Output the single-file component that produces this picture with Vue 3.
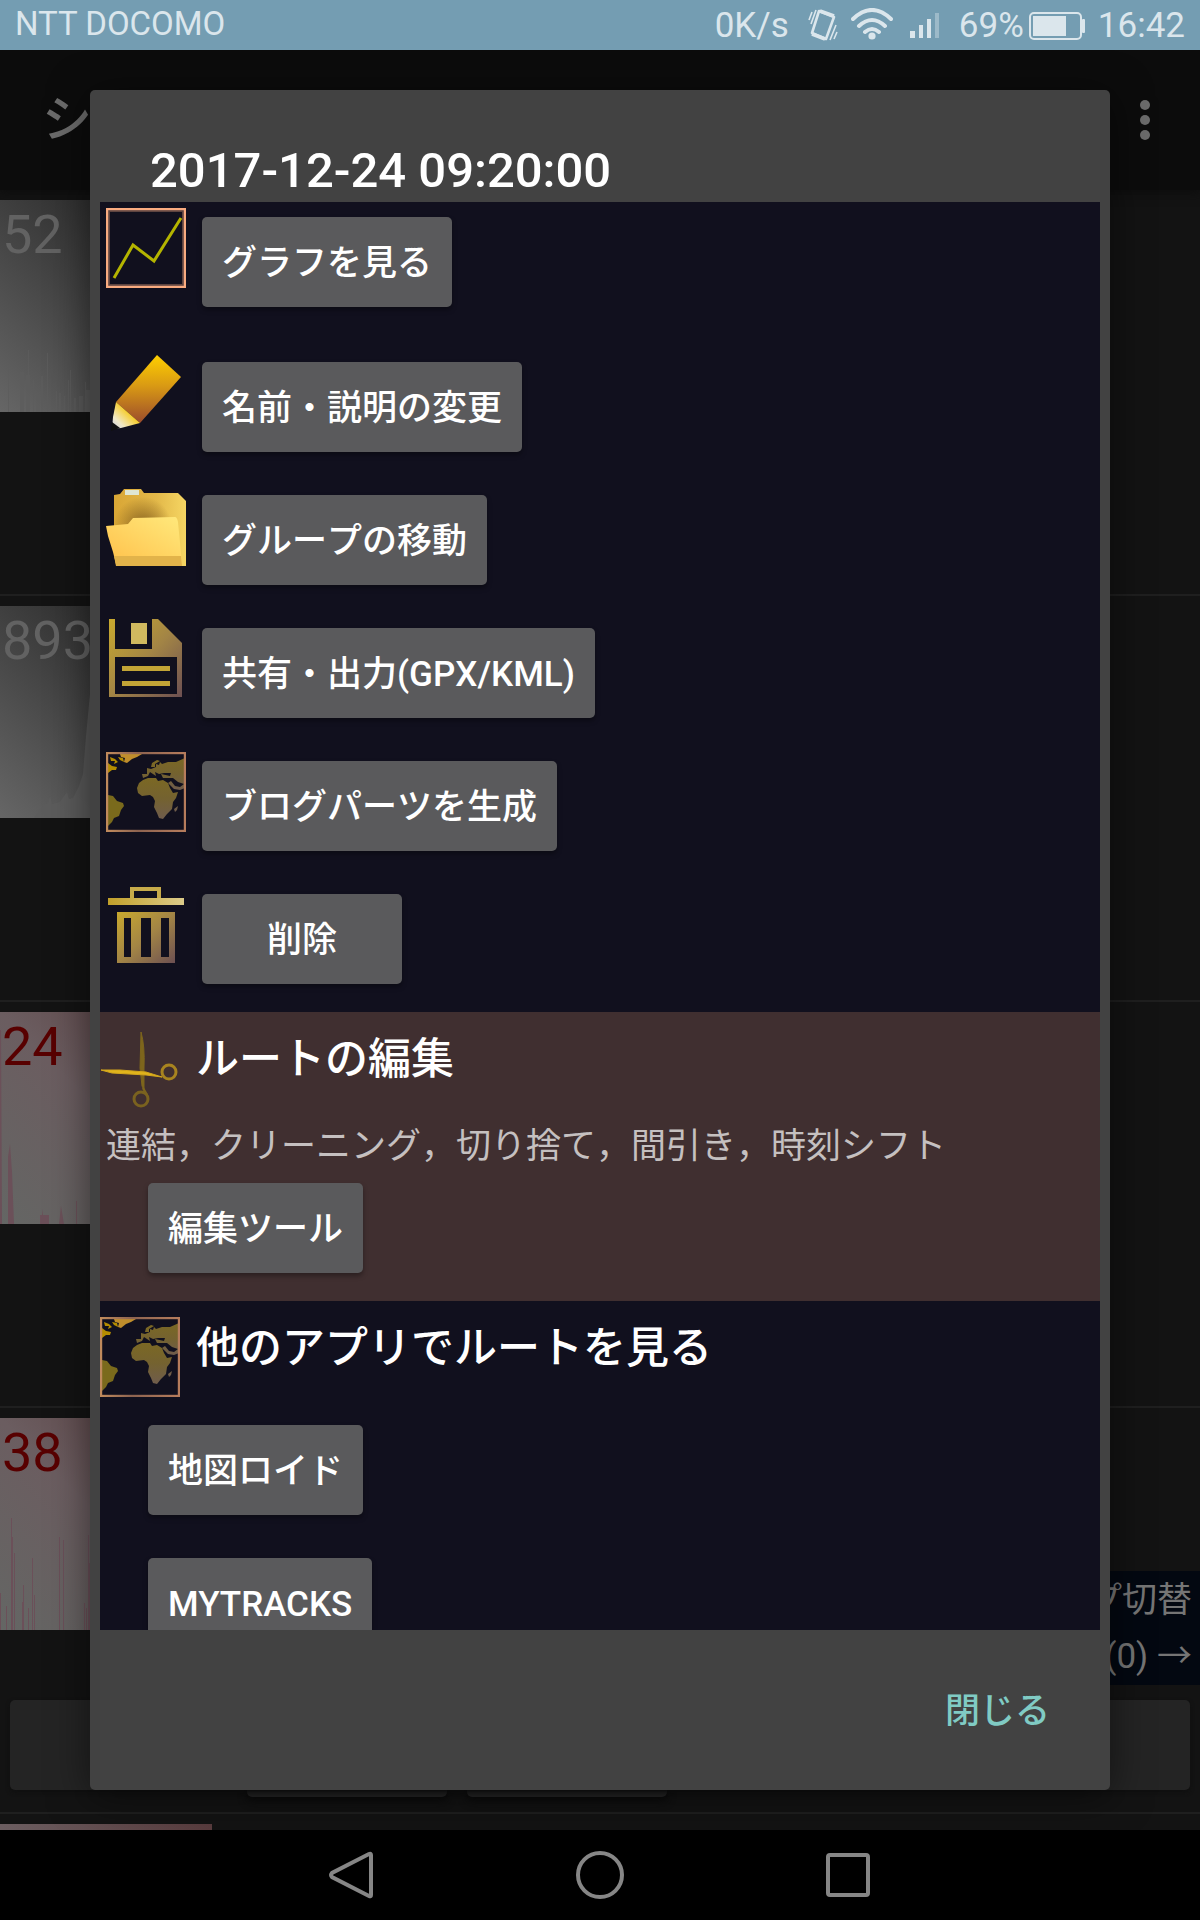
<template>
  <div class="phone">
    <svg class="defs" aria-hidden="true">
      <defs>
        <linearGradient id="gold" x1="0" y1="0" x2="1" y2="1">
          <stop offset="0" stop-color="#c9a92e" />
          <stop offset="0.5" stop-color="#a38545" />
          <stop offset="1" stop-color="#6d5052" />
        </linearGradient>
        <linearGradient id="lid" x1="0" y1="0" x2="1" y2="0">
          <stop offset="0" stop-color="#c2a02a" />
          <stop offset="1" stop-color="#dccb8a" />
        </linearGradient>
        <linearGradient id="pencil-body" x1="0" y1="0" x2="0" y2="1">
          <stop offset="0" stop-color="#ffcf00" />
          <stop offset="0.45" stop-color="#d99a14" />
          <stop offset="1" stop-color="#9c4c2c" />
        </linearGradient>
        <linearGradient id="pencil-tip" x1="1" y1="0" x2="0" y2="1">
          <stop offset="0.4" stop-color="#f7cd2c" />
          <stop offset="0.75" stop-color="#f0e8c8" />
          <stop offset="0.9" stop-color="#d8d8d8" />
        </linearGradient>
        <linearGradient id="folder-back" x1="0" y1="0" x2="1" y2="0">
          <stop offset="0" stop-color="#d9a635" />
          <stop offset="0.6" stop-color="#e3b94a" />
          <stop offset="1" stop-color="#f6d663" />
        </linearGradient>
        <radialGradient id="folder-shade" cx="0.4" cy="0.45" r="0.4">
          <stop offset="0" stop-color="#8a6420" />
          <stop offset="1" stop-color="#8a6420" stop-opacity="0" />
        </radialGradient>
        <linearGradient id="folder-front" x1="0" y1="1" x2="1" y2="0">
          <stop offset="0" stop-color="#ffc04a" />
          <stop offset="1" stop-color="#ffe97c" />
        </linearGradient>
        <linearGradient id="land" x1="0" y1="0" x2="0" y2="1">
          <stop offset="0" stop-color="#7b6824" />
          <stop offset="0.5" stop-color="#746230" />
          <stop offset="1" stop-color="#6f5c4c" />
        </linearGradient>
        <linearGradient id="map-frame" x1="0" y1="0" x2="1" y2="0">
          <stop offset="0" stop-color="#c08a5c" />
          <stop offset="0.4" stop-color="#8d6350" />
          <stop offset="1" stop-color="#b67c5c" />
        </linearGradient>
      </defs>
      <symbol id="icon-chart" viewBox="0 0 80 80">
        <rect x="2.5" y="2.5" width="75" height="75" fill="none" stroke="#5e4440" stroke-width="3" />
        <rect x="1" y="1" width="78" height="78" fill="none" stroke="#f9ab80" stroke-width="2.4" />
        <path d="M8 70L27 37L48 53L75 10" fill="none" stroke="#b4b400" stroke-width="3" />
      </symbol>
      <symbol id="icon-pencil" viewBox="0 0 80 80">
        <path d="M51 2L75 24L34 70L10 49Z" fill="url(#pencil-body)" />
        <path d="M10 49L34 70L15 75L6 76L7 64Z" fill="url(#pencil-tip)" />
        <path d="M6 69L14 75L5 78Z" fill="#111" />
      </symbol>
      <symbol id="icon-folder" viewBox="0 0 80 80">
        <path d="M8 9L14 8L18 3H35L38 7H72L80 15V80H10L8 40Z" fill="url(#folder-back)" />
        <path d="M8 9L14 8L72 7L80 15V80H10L8 40Z" fill="url(#folder-shade)" />
        <rect x="19" y="4" width="14" height="5" fill="#dfe6d2" />
        <path d="M0 40L22 38L27 32L69 31Q71 31 72 36L76 78H10L7 66L2 50Z" fill="url(#folder-front)" />
        <path d="M8 70H75L76 80H10Z" fill="#e2b34a" />
      </symbol>
      <symbol id="icon-save" viewBox="0 0 80 80">
        <path d="M3 0H9V30H46V0H52L76 24V78H3ZM9 38V75H71V38Z" fill="url(#gold)" fill-rule="evenodd" />
        <rect x="25" y="4" width="16" height="21" fill="#d0b95f" />
        <rect x="16" y="47" width="48" height="5" fill="#c2a436" />
        <rect x="16" y="62" width="48" height="5" fill="#c2a436" />
      </symbol>
      <symbol id="icon-map" viewBox="0 0 80 80">
        <path d="M14 2H36L31 5L26 7L21 11L18 10L19 6L15 5Z" fill="#c08e2c" />
        <path d="M2 11L6 14L11 15L10 18L6 18L2 21ZM4 5L9 7L12 10L8 12L9 9L5 9ZM12 5L17 6L18 10L14 8Z" fill="#b48c00" />
        <path d="M2 43L7 44L11 49L17 51L18 54L15 58L13 64L8 66L6 70L2 74Z" fill="#7a6a1c" />
        <g fill="url(#land)">
          <path d="M31 36L33 31L37 28L42 26L50 26L52 29L57 28L62 31L64 36L67 41L72 40L70 46L67 50L66 57L61 62L57 67L53 66L51 61L48 55L49 49L47 45L44 43L36 44L32 41Z" />
          <path d="M37 26L36 22L41 22L41 16L45 17L50 15L50 12L53 13L54 10L56 12L62 10L70 10L79 6V36L74 38L68 37L62 31L65 29L69 34L74 35L78 32L72 30L67 26L57 26L55 22L64 24L65 21L58 21L53 22L49 20L50 24L44 20L42 24Z" />
          <path d="M45 15L46 11L51 8L54 9L49 12L49 15ZM68 57L72 54L71 58L69 60Z" />
        </g>
        <rect x="1" y="1" width="78" height="78" fill="none" stroke="url(#map-frame)" stroke-width="2.4" />
      </symbol>
      <symbol id="icon-trash" viewBox="0 0 80 80">
        <path d="M26 14V4H53V14" fill="none" stroke="#c7ab4a" stroke-width="4" />
        <rect x="2" y="13" width="76" height="7" fill="url(#lid)" />
        <path d="M11 27H69V78H11ZM18 33V72H25V33ZM35 33V72H45V33ZM55 33V72H63V33Z" fill="url(#gold)" fill-rule="evenodd" />
      </symbol>
      <symbol id="icon-scissors" viewBox="0 0 80 80">
        <path d="M41 4Q45 18 44 40L44 62L42 58L40 40Z" fill="#7d651c" stroke="#7d651c" />
        <path d="M43 60L47 67" stroke="#7d651c" stroke-width="2.4" />
        <circle cx="41" cy="71" r="7" fill="none" stroke="#7a621f" stroke-width="3" />
        <path d="M1 42L20 42L46 44L62 49L46 47L12 45Z" fill="#e0b41c" stroke="#d2a51c" />
        <circle cx="69" cy="44" r="7" fill="none" stroke="#a8841f" stroke-width="3" />
      </symbol>
    </svg>

    <header class="status">
      <span class="carrier">NTT DOCOMO</span>
      <div class="status-right">
        <span>0K/s</span>
        <svg class="vibrate" viewBox="0 0 30 34" fill="none" stroke="#dbe6ec">
          <path d="M11 3L26 9L18 31L4 25Z" stroke-width="2.6" stroke-linejoin="round" />
          <path d="M12 3L26 8M4 26L17 31" stroke-width="3.6" />
          <path d="M8 2L3 16M4 4L1 12M28 17L22 32M29 24L26 31" stroke-width="1.6" />
        </svg>
        <svg class="wifi" viewBox="0 0 42 32" fill="none" stroke="#dbe6ec" stroke-width="4" stroke-linecap="round">
          <path d="M2 11Q21 -7 40 11M8 18Q21 6 34 18M14 24Q21 18 28 24" />
          <circle cx="21" cy="28" r="3.6" fill="#dbe6ec" stroke="none" />
        </svg>
        <svg class="signal" viewBox="0 0 30 26" fill="#dbe6ec">
          <rect x="0" y="18" width="5" height="7" />
          <rect x="9" y="12" width="4" height="13" />
          <rect x="17" y="6" width="4" height="19" />
          <rect x="25" y="0" width="4" height="25" opacity="0.4" />
        </svg>
        <span class="percent">69%</span>
        <svg class="battery" viewBox="0 0 56 28">
          <rect x="1" y="1" width="51" height="26" rx="4" fill="none" stroke="#dbe6ec" stroke-width="2" />
          <rect x="4" y="4" width="33" height="20" fill="#dbe6ec" />
          <rect x="53" y="7" width="3" height="14" rx="1" fill="#dbe6ec" />
        </svg>
        <span>16:42</span>
      </div>
    </header>

    <main class="screen">
      <div class="app-bar">
        <span>シ</span>
        <button class="more" aria-label="メニュー"><i></i><i></i><i></i></button>
      </div>

      <ul class="tracks">
        <li v-for="track in tracks" :key="track.id" class="track">
          <div class="tile" :class="track.tone">
            <svg viewBox="0 0 212 212"><path :d="track.graph" /></svg>
            <span>{{ track.label }}</span>
          </div>
          <span class="slot"></span>
          <span class="slot"></span>
        </li>
      </ul>

      <div class="group-switch">
        <span>プ切替</span>
        <span>(0) →</span>
      </div>
      <div class="bottom-bar"></div>

      <section class="dialog" role="dialog" aria-labelledby="dialog-title">
        <h1 id="dialog-title">2017-12-24 09:20:00</h1>

        <div class="dialog-body">
          <div v-for="action in actions" :key="action.icon" class="row">
            <svg class="icon"><use :href="'#icon-' + action.icon" /></svg>
            <button class="btn">{{ action.label }}</button>
          </div>

          <div class="block edit">
            <div class="block-head">
              <svg class="icon"><use href="#icon-scissors" /></svg>
              <h2>ルートの編集</h2>
            </div>
            <p>連結，クリーニング，切り捨て，間引き，時刻シフト</p>
            <button class="btn">編集ツール</button>
          </div>

          <div class="block">
            <div class="block-head">
              <svg class="icon"><use href="#icon-map" /></svg>
              <h2>他のアプリでルートを見る</h2>
            </div>
            <div class="apps">
              <button v-for="app in apps" :key="app" class="btn">{{ app }}</button>
            </div>
          </div>
        </div>

        <footer>
          <button class="close">閉じる</button>
        </footer>
      </section>
    </main>

    <nav class="nav">
      <button aria-label="戻る">
        <svg viewBox="0 0 48 48"><path d="M43 4Q43 2 41 3L4 22Q2 24 4 26L41 45Q43 46 43 44Z" /></svg>
      </button>
      <button aria-label="ホーム">
        <svg viewBox="0 0 48 48"><circle cx="24" cy="24" r="22" /></svg>
      </button>
      <button aria-label="履歴">
        <svg viewBox="0 0 48 48"><rect x="4" y="4" width="40" height="40" rx="2" /></svg>
      </button>
    </nav>
  </div>
</template>

<script setup>
import { ref } from 'vue';

const actions = ref([
  { icon: 'chart', label: 'グラフを見る' },
  { icon: 'pencil', label: '名前・説明の変更' },
  { icon: 'folder', label: 'グループの移動' },
  { icon: 'save', label: '共有・出力(GPX/KML)' },
  { icon: 'map', label: 'ブログパーツを生成' },
  { icon: 'trash', label: '削除' },
]);

const apps = ref(['地図ロイド', 'MYTRACKS']);

// [x, y, largeur] pour chaque pic, la base est à 212
const spikes = (list) => list.map(([x, y, w]) => `M${x} 212V${y}h${w}V212Z`).join('');

const tracks = ref([
  {
    id: 1,
    label: '52',
    tone: 'gray',
    graph: spikes([
      [8, 166, 1], [20, 172, 4], [28, 150, 1], [26, 175, 4], [33, 180, 1], [36, 195, 4], [41, 176, 2],
      [47, 153, 1], [56, 191, 1], [59, 193, 2], [64, 196, 1], [68, 180, 1], [70, 170, 1], [74, 198, 2],
      [79, 196, 4], [85, 182, 1], [86, 190, 4],
    ]),
  },
  {
    id: 2,
    label: '893',
    tone: 'gray',
    graph: 'M34 212L40 203L48 197L50 190L52 198L60 196L67 186L69 193L73 192L79 180L83 168L86 130L90 88V212Z',
  },
  {
    id: 3,
    label: '24',
    tone: 'pink',
    graph: 'M0 212V18H1L2 212ZM1 212V108L2 212ZM8 212V145L10 132L12 160L14 212ZM40 212V203H42V197L43 203H49V212ZM59 212L61 194L64 212ZM76 212V189H77V212Z',
  },
  {
    id: 4,
    label: '38',
    tone: 'pink',
    graph: spikes([
      [0, 175, 1], [6, 188, 1], [11, 100, 1], [12, 119, 1], [14, 135, 1], [22, 184, 1], [23, 167, 1],
      [28, 190, 1], [32, 140, 1], [34, 177, 1], [59, 119, 1], [63, 122, 1], [84, 185, 1], [86, 190, 1],
      [88, 117, 1], [89, 145, 2],
    ]),
  },
  { id: 5, label: '', tone: 'pink', graph: '' },
]);
</script>

<style>
body {
  background: #000;
}
</style>

<style scoped>
* {
  box-sizing: border-box;
}

.phone {
  display: flex;
  flex-direction: column;
  height: 100vh;
  overflow: hidden;
  background: #000;
  color: #fff;
  font-family: Roboto, "Noto Sans CJK JP", sans-serif;
  font-size: 35px;
}

.defs {
  position: absolute;
  width: 0;
  height: 0;
}

button {
  padding: 0;
  border: 0;
  background: none;
  font-family: inherit;
  color: inherit;
}

.status {
  display: flex;
  justify-content: space-between;
  flex: none;
  height: 50px;
  padding: 0 15px;
  background: #749db2;
  color: #dbe6ec;
}

.carrier {
  font-size: 33px;
  line-height: 48px;
}

.status-right {
  display: flex;
  align-items: center;
  padding-top: 2px;
  line-height: 48px;
}

.vibrate {
  width: 30px;
  height: 34px;
  margin: 0 13px 2px 19px;
}

.wifi {
  width: 42px;
  height: 32px;
  margin-bottom: 4px;
}

.signal {
  width: 30px;
  height: 26px;
  margin: 0 19px 0 17px;
}

.battery {
  width: 56px;
  height: 28px;
  margin: 0 13px 0 5px;
}

.screen {
  position: relative;
  display: flex;
  flex-direction: column;
  flex: 1;
  min-height: 0;
  overflow: hidden;
  background: #131313;
}

.app-bar {
  display: flex;
  align-items: center;
  justify-content: space-between;
  flex: none;
  height: 140px;
  padding: 0 50px 0 42px;
  background: #0c0c0c;
  box-shadow: 0 2px 10px #0c0c0c;
  color: #6b6b6b;
  font-size: 50px;
}

.app-bar span {
  padding-bottom: 10px;
  font-weight: 500;
}

.more {
  display: flex;
  flex-direction: column;
  gap: 5px;
}

.more i {
  width: 10px;
  height: 10px;
  border-radius: 50%;
  background: #6b6b6b;
}

.tracks {
  flex: 1;
  min-height: 0;
  margin: 0;
  padding: 0;
  overflow: hidden;
  list-style: none;
}

.track {
  display: flex;
  align-items: flex-end;
  gap: 20px;
  height: 406px;
  padding: 10px 0 15px;
  border-bottom: 2px solid #1f1f1f;
}

.tile {
  position: relative;
  align-self: flex-start;
  width: 212px;
  height: 212px;
  margin-right: 15px;
  padding: 3px 2px;
  font-size: 54px;
  line-height: 64px;
}

.tile svg {
  position: absolute;
  inset: 0;
}

.tile span {
  position: relative;
}

.gray {
  background: linear-gradient(to top right, #666, #3f3f3f 50%, #1a1a1a);
  color: #626262;
}

.gray path {
  fill: #5c5c5c;
  opacity: 0.8;
}

.pink {
  background: linear-gradient(to top right, #646664, #6b5d60 50%, #593c3e);
  color: #580000;
}

.pink path {
  fill: #6b5059;
}

.slot {
  width: 200px;
  height: 90px;
  border-radius: 5px;
  background: #262626;
  box-shadow: 0 4px 8px #0a0a0a;
}

.group-switch {
  position: absolute;
  right: 0;
  bottom: 145px;
  display: flex;
  flex-direction: column;
  align-items: flex-end;
  width: 240px;
  padding: 2px 8px 0;
  background: #030811;
  color: #757575;
  line-height: 56px;
}

.bottom-bar {
  position: absolute;
  right: 10px;
  bottom: 40px;
  left: 10px;
  height: 90px;
  border-radius: 5px;
  background: #242424;
  box-shadow: 0 2px 4px #0f0f0f;
}

.dialog {
  position: absolute;
  inset: 40px 90px;
  display: flex;
  flex-direction: column;
  padding: 0 10px;
  border-radius: 5px;
  background: #424242;
  box-shadow: 0 6px 40px rgba(0, 0, 0, 0.5);
}

h1 {
  margin: 0;
  padding: 50px 50px 0;
  font-size: 49px;
  font-weight: 500;
  line-height: 62px;
}

.dialog-body {
  flex: 1;
  min-height: 0;
  overflow: hidden;
  background: #11101e;
}

.row {
  display: flex;
  align-items: flex-start;
  gap: 16px;
  height: 133px;
  padding: 6px 6px 0;
}

.row:first-child {
  height: 145px;
}

.row .btn {
  min-width: 200px;
  margin-top: 9px;
  font-kerning: none;
}

.icon {
  flex: none;
  width: 80px;
  height: 80px;
}

.btn {
  height: 90px;
  padding: 4px 20px 0;
  border-radius: 5px;
  background: #5a5a5c;
  box-shadow: 0 3px 5px rgba(0, 0, 0, 0.35);
  color: #fff;
  font-size: 35px;
  font-weight: 500;
  line-height: 50px;
}

.block {
  padding-top: 16px;
}

.block-head {
  display: flex;
  gap: 16px;
  height: 92px;
}

h2 {
  margin: 0;
  font-size: 43px;
  font-weight: 500;
  line-height: 62px;
}

.edit {
  padding-bottom: 28px;
  background: #402f30;
}

.edit p {
  margin: 0;
  padding: 2px 6px 0;
  color: #c5c0c0;
  font-kerning: none;
  line-height: 50px;
}

.edit .btn {
  margin: 11px 48px 0;
}

.apps {
  display: flex;
  flex-direction: column;
  align-items: flex-start;
  gap: 43px;
  padding: 16px 48px 0;
}

footer {
  display: flex;
  align-items: center;
  justify-content: flex-end;
  flex: none;
  height: 160px;
  padding: 4px 50px 0;
}

.close {
  color: #80cbc4;
  font-size: 35px;
  font-weight: 500;
  line-height: 50px;
}

.nav {
  display: flex;
  align-items: center;
  justify-content: center;
  gap: 200px;
  flex: none;
  height: 90px;
  background: #000;
}

.nav button {
  width: 48px;
  height: 48px;
}

.nav svg {
  display: block;
  fill: none;
  stroke: #868686;
  stroke-width: 4;
}
</style>
